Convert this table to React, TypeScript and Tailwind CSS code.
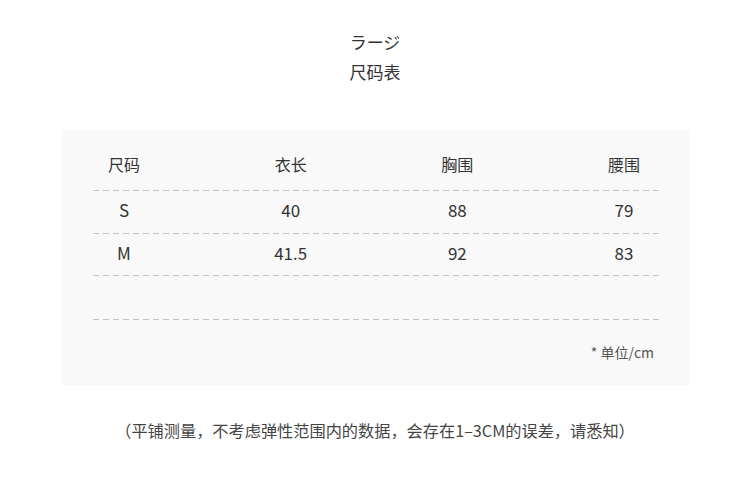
import React from "react";

const font = { fontFamily: '"Noto Sans CJK SC", "Noto Sans", sans-serif' };

function Dash() {
  return (
    <div className="ml-[31px] h-px w-[566px] bg-[repeating-linear-gradient(90deg,#c4c4c4_0_6px,transparent_6px_10px)]" />
  );
}

function Row({ cells, cls }: { cells: string[]; cls: string }) {
  return (
    <div className={`grid grid-cols-[repeat(4,100px)] gap-x-[66.67px] pl-[12px] items-start ${cls}`}>
      {cells.map((c, i) => (
        <div key={i} className="text-center">
          {c}
        </div>
      ))}
    </div>
  );
}

export default function App() {
  return (
    <div className="w-[750px] h-[498px] bg-white text-[#333]" style={font}>
      <div className="flex flex-col items-center pt-[29px]">
        <div className="text-[17px] leading-[26px]">ラージ</div>
        <div className="text-[17px] leading-[26px] mt-[4px]">尺码表</div>
      </div>
      <div className="ml-[62px] mt-[45px] w-[627px] h-[255px] bg-[#f9f9f9] pt-[22px]">
        <Row cells={["尺码", "衣长", "胸围", "腰围"]} cls="h-[24px] text-[16px] leading-[24px]" />
        <div className="h-[14px]" />
        <Dash />
        <Row cells={["S", "40", "88", "79"]} cls="h-[42px] text-[17px] leading-[24px] pt-[7px]" />
        <Dash />
        <Row cells={["M", "41.5", "92", "83"]} cls="h-[41px] text-[17px] leading-[24px] pt-[7px]" />
        <Dash />
        <div className="h-[43px]" />
        <Dash />
        <div className="flex justify-end pr-[35px] pt-[22px] text-[14px] leading-[20px] text-[#555]">
          * 单位/cm
        </div>
      </div>
      <div className="mt-[33px] text-center text-[16.2px] leading-[24px] text-[#444]">
        （平铺测量，不考虑弹性范围内的数据，会存在1–3CM的误差，请悉知）
      </div>
    </div>
  );
}
